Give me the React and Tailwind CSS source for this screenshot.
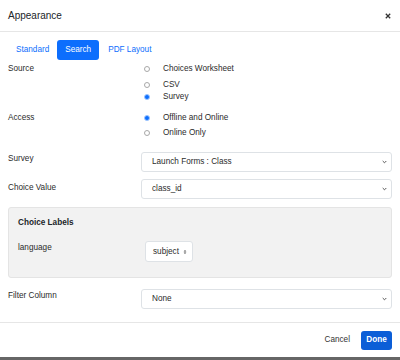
import React from "react";

const Radio = ({ checked }) => (
  <span
    className={
      checked
        ? "w-[6px] h-[6px] rounded-full bg-[#0d6efd] border-[1.5px] border-[#9ec5fe] shrink-0"
        : "w-[6px] h-[6px] rounded-full bg-white border border-[#a8a8a8] shrink-0"
    }
  />
);

const RadioRow = ({ label, checked, className = "" }) => (
  <div className={`h-[12px] flex items-center ${className}`}>
    <span className="w-[21px] flex justify-start pl-[2px]">
      <Radio checked={checked} />
    </span>
    <span>{label}</span>
  </div>
);

const Chevron = () => (
  <svg width="5" height="4" viewBox="0 0 5 4" className="shrink-0">
    <path d="M0.7 1 L2.5 2.8 L4.3 1" stroke="#555" strokeWidth="1" fill="none" />
  </svg>
);

const Select = ({ value, className = "" }) => (
  <div
    className={`flex-1 h-[20px] border border-[#dee2e6] rounded-[3px] bg-white flex items-center justify-between pl-[10px] pr-[4px] ${className}`}
  >
    <span>{value}</span>
    <Chevron />
  </div>
);

export default function App() {
  return (
    <div className="w-[400px] h-[360px] bg-[#666] overflow-hidden">
      <div
        className="h-[357px] bg-white flex flex-col text-[8.2px] text-[#2b2b2b] leading-[12px]"
        style={{ fontFamily: "'Liberation Sans', Arial, sans-serif" }}
      >
        {/* header */}
        <div className="h-[32px] border-b border-[#e6e6e6] flex items-center justify-between pl-[8px] pr-[9px]">
          <span className="text-[10px] text-[#212529]">Appearance</span>
          <svg width="6" height="6" viewBox="0 0 6 6">
            <path d="M0.8 0.8 L5.2 5.2 M5.2 0.8 L0.8 5.2" stroke="#333" strokeWidth="1.3" />
          </svg>
        </div>

        <div className="px-[8px] flex-1">
          {/* tabs */}
          <div className="mt-[8px] h-[20px] flex items-center">
            <span className="ml-[8px] text-[#0d6efd]">Standard</span>
            <span className="ml-[8px] h-[20px] px-[8px] rounded-[3px] bg-[#0d6efd] text-white flex items-center">
              Search
            </span>
            <span className="ml-[9px] text-[#0d6efd]">PDF Layout</span>
          </div>

          {/* source */}
          <div className="mt-[3px] flex">
            <div className="w-[134px]">Source</div>
            <div>
              <RadioRow label="Choices Worksheet" />
              <RadioRow label="CSV" className="mt-[4px]" />
              <RadioRow label="Survey" checked />
            </div>
          </div>

          {/* access */}
          <div className="mt-[9px] flex">
            <div className="w-[134px]">Access</div>
            <div>
              <RadioRow label="Offline and Online" checked />
              <RadioRow label="Online Only" className="mt-[3px]" />
            </div>
          </div>

          <div className="mt-[13px] flex items-start">
            <div className="w-[133px] pt-[1px]">Survey</div>
            <Select value="Launch Forms : Class" />
          </div>

          <div className="mt-[7px] flex items-start">
            <div className="w-[133px] pt-[3px]">Choice Value</div>
            <Select value="class_id" />
          </div>

          {/* choice labels */}
          <div className="mt-[8px] h-[71px] bg-[#f2f2f2] border border-[#e4e4e4] rounded-[3px] pt-[9px] px-[9px]">
            <div className="font-bold text-[#212529]">Choice Labels</div>
            <div className="mt-[12px] flex items-start">
              <div className="w-[127px] pt-[1px]">language</div>
              <div className="h-[21px] w-[48px] border border-[#dee2e6] rounded-[3px] bg-white flex items-center pl-[7px] gap-[4px]">
                <span>subject</span>
                <svg width="4" height="6" viewBox="0 0 4 6">
                  <path d="M0.6 2.4 L2 1 L3.4 2.4 Z M0.6 3.6 L2 5 L3.4 3.6 Z" fill="#555" />
                </svg>
              </div>
            </div>
          </div>

          <div className="mt-[11px] flex items-start">
            <div className="w-[133px] pt-[1px]">Filter Column</div>
            <Select value="None" className="h-[19px]" />
          </div>
        </div>

        {/* footer */}
        <div className="h-[35px] border-t border-[#e6e6e6] flex items-center justify-end pr-[8px]">
          <span className="text-[#333]">Cancel</span>
          <span className="ml-[11px] h-[19px] w-[31px] rounded-[3px] bg-[#0b5ed7] text-white flex items-center justify-center font-bold">
            Done
          </span>
        </div>
      </div>
    </div>
  );
}
